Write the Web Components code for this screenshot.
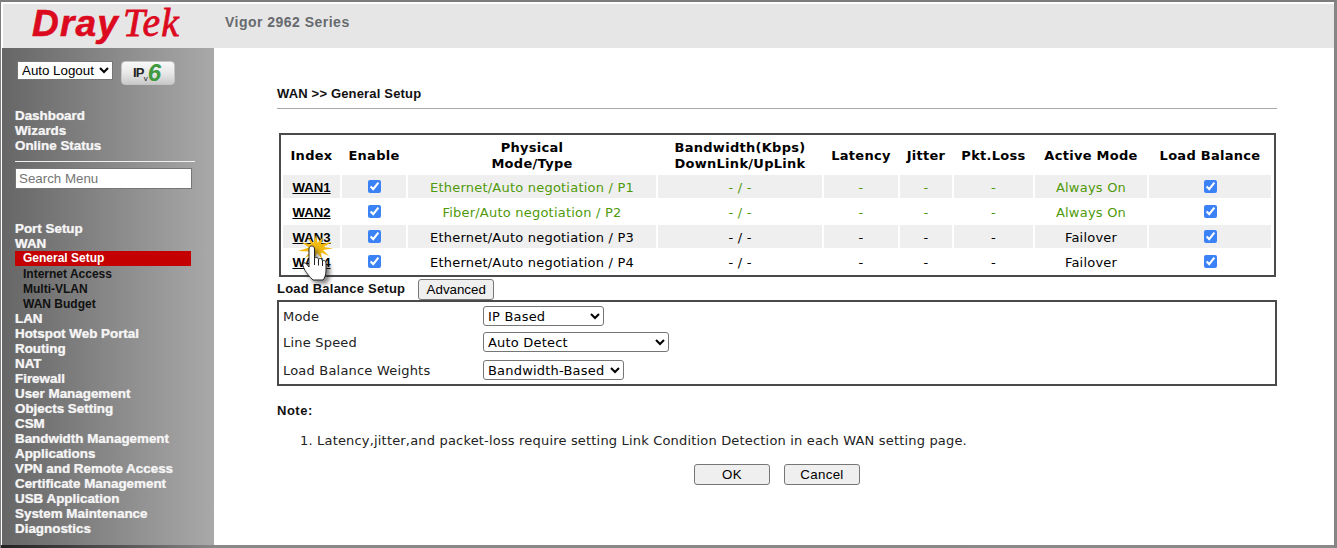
<!DOCTYPE html>
<html>
<head>
<meta charset="utf-8">
<title>Vigor 2962 Series</title>
<style>
    html, body { margin: 0; padding: 0; background: #fff; }
</style>
</head>
<body>
<router-frame>
    <dray-header slot="top"></dray-header>
    <side-menu slot="side"></side-menu>
    <wan-page slot="main"></wan-page>
</router-frame>

<script>
const frameTpl = document.createElement('template')
frameTpl.innerHTML = `
<style>
    :host {
        display: flex;
        flex-direction: column;
        box-sizing: border-box;
        width: 1337px;
        height: 548px;
        overflow: hidden;
        position: relative;
        background: #fff;
        border-top: 2px solid #7d7d7d;
        border-left: 1px solid #7d7d7d;
        border-right: 3px solid #868686;
        padding-top: 2px;
    }
    .row { display: flex; flex: 1; min-height: 0; padding-left: 1px; }
    .edge {
        height: 3px;
        flex: none;
        background: linear-gradient(90deg, #222 0, #555 120px, #888 214px, #8a8a8a 100%);
    }
</style>
<slot name="top"></slot>
<div class="row">
    <slot name="side"></slot>
    <slot name="main"></slot>
</div>
<div class="edge"></div>
`
class RouterFrame extends HTMLElement {
    constructor() {
        super()
        this.attachShadow({ mode: 'open' })
        this.shadowRoot.appendChild(frameTpl.content.cloneNode(true))
    }
}
customElements.define('router-frame', RouterFrame)

const headerTpl = document.createElement('template')
headerTpl.innerHTML = `
<style>
    :host {
        display: flex;
        align-items: center;
        height: 44px;
        flex: none;
        margin-left: 2px;
        background: #e6e6e6;
    }
    .logo {
        width: 196px;
        height: 48px;
        margin-top: -4px;
        align-self: flex-start;
        padding-left: 29px;
        box-sizing: border-box;
        display: flex;
        align-items: baseline;
        color: #dc0a1e;
        white-space: nowrap;
    }
    .dray {
        font: italic bold 37px "Liberation Sans", sans-serif;
        letter-spacing: 1.2px;
        -webkit-text-stroke: .6px #dc0a1e;
    }
    .tek {
        font: italic 39.500px "Liberation Serif", serif;
        margin-left: 4px;
        letter-spacing: 1.200px;
        -webkit-text-stroke: .8px #dc0a1e;
    }
    .title {
        margin: 0 0 8px 26px;
        font: bold 14px "Liberation Sans", sans-serif;
        letter-spacing: .48px;
        color: #666a6e;
    }
</style>
<div class="logo"><span class="dray">Dray</span><span class="tek">Tek</span></div>
<div class="title">Vigor 2962 Series</div>
`
class DrayHeader extends HTMLElement {
    constructor() {
        super()
        this.attachShadow({ mode: 'open' })
        this.shadowRoot.appendChild(headerTpl.content.cloneNode(true))
    }
}
customElements.define('dray-header', DrayHeader)

const menuTpl = document.createElement('template')
menuTpl.innerHTML = `
<style>
    :host {
        display: block;
        flex: none;
        width: 212px;
        box-sizing: border-box;
        padding: 13px 22px 0 13px;
        background: linear-gradient(90deg, #666 0, #a9a9a9 100%);
        font: bold 13.4px/15px "Liberation Sans", sans-serif;
        color: #f5f5f5;
    }
    .tools { display: flex; align-items: flex-start; padding-left: 2px; gap: 8px; height: 47px; }
    .tools select {
        width: 96px;
        height: 19px;
        margin: 0;
        padding: 0;
        font: 13.33px "Liberation Sans", sans-serif;
        color: #000;
        background: #fff;
        border: 1px solid #767676;
        border-radius: 0;
    }
    .ipv6 {
        width: 54px;
        height: 24px;
        box-sizing: border-box;
        padding-left: 11px;
        border: 1px solid #c4c4c4;
        border-radius: 4px;
        background: linear-gradient(#f8f8f8, #e8e8e8 50%, #c9c9c9);
        display: flex;
        align-items: center;
        color: #222;
        font: bold 13px/22px "Liberation Sans", sans-serif;
        letter-spacing: -.8px;
    }
    .ipv6 small { font-size: 8px; align-self: flex-end; line-height: 11px; font-weight: normal; letter-spacing: 0; }
    .ipv6 b { font: italic bold 24px/22px "Liberation Sans", sans-serif; color: #3f9a3f; letter-spacing: 0; }
    .item { display: block; height: 15px; white-space: nowrap; -webkit-text-stroke: .2px #f5f5f5; text-shadow: 0 0 1px rgba(255,255,255,.4); }
    .rule { height: 1px; background: #f0f0f0; margin: 8px 0 6px; width: 180px; }
    .search {
        display: block;
        box-sizing: border-box;
        width: 177px;
        height: 21px;
        margin: 0 0 32px;
        padding: 1px 3px;
        font: 13.33px "Liberation Sans", sans-serif;
        background: #fff;
        border: 1px solid #767676;
    }
    .search::placeholder { color: #757575; }
    .sub { display: block; height: 15px; font-size: 12px; line-height: 16px; padding-left: 8px; color: #111; white-space: nowrap; }
    .sub.on { background: #c40000; color: #fff; width: 168px; line-height: 15px; }
</style>
<div class="tools">
    <select><option>Auto Logout</option></select>
    <div class="ipv6">IP<small>v</small><b>6</b></div>
</div>
<span class="item">Dashboard</span>
<span class="item">Wizards</span>
<span class="item">Online Status</span>
<div class="rule"></div>
<input class="search" placeholder="Search Menu">
<span class="item">Port Setup</span>
<span class="item">WAN</span>
<span class="sub on">General Setup</span>
<span class="sub">Internet Access</span>
<span class="sub">Multi-VLAN</span>
<span class="sub">WAN Budget</span>
<span class="item">LAN</span>
<span class="item">Hotspot Web Portal</span>
<span class="item">Routing</span>
<span class="item">NAT</span>
<span class="item">Firewall</span>
<span class="item">User Management</span>
<span class="item">Objects Setting</span>
<span class="item">CSM</span>
<span class="item">Bandwidth Management</span>
<span class="item">Applications</span>
<span class="item">VPN and Remote Access</span>
<span class="item">Certificate Management</span>
<span class="item">USB Application</span>
<span class="item">System Maintenance</span>
<span class="item">Diagnostics</span>
`
class SideMenu extends HTMLElement {
    constructor() {
        super()
        this.attachShadow({ mode: 'open' })
        this.shadowRoot.appendChild(menuTpl.content.cloneNode(true))
    }
}
customElements.define('side-menu', SideMenu)

const COLS = '57px 64px 248px 164px 74px 52px 79px 112px 122px'

const rowTpl = document.createElement('template')
rowTpl.innerHTML = `
<style>
    :host {
        display: grid;
        grid-template-columns: ${COLS};
        grid-template-rows: 23px;
        column-gap: 2px;
        height: 23px;
        margin-bottom: 2px;
        font: 13px/25px "DejaVu Sans", sans-serif;
        letter-spacing: .22px;
        color: var(--row-color, #000);
        text-align: center;
    }
    div { background: var(--row-bg, transparent); white-space: nowrap; height: 23px; }
    .idx { font: bold 13.2px/25px "Liberation Sans", sans-serif; letter-spacing: 0; color: #000; text-decoration: underline; }
    input { width: 13px; height: 13px; margin: 5px 0 0; accent-color: #3b82f6; display: inline-block; vertical-align: top; }
</style>
<div class="idx"><span id="name"></span></div>
<div><input type="checkbox" checked></div>
<div id="mode"></div>
<div>- / -</div>
<div>-</div>
<div>-</div>
<div>-</div>
<div id="active"></div>
<div><input type="checkbox" checked></div>
`
class WanRow extends HTMLElement {
    constructor() {
        super()
        this.attachShadow({ mode: 'open' })
        this.shadowRoot.appendChild(rowTpl.content.cloneNode(true))
    }
    connectedCallback() {
        this.shadowRoot.getElementById('name').textContent = this.getAttribute('name')
        this.shadowRoot.getElementById('mode').textContent = this.getAttribute('mode')
        this.shadowRoot.getElementById('active').textContent = this.getAttribute('active')
    }
}
customElements.define('wan-row', WanRow)

const tableTpl = document.createElement('template')
tableTpl.innerHTML = `
<style>
    :host {
        display: block;
        box-sizing: border-box;
        width: 997px;
        height: 144px;
        margin-left: 2px;
        border: 2px solid #4a4a4a;
        padding: 0 0 0 2px;
        position: relative;
    }
    .head {
        display: grid;
        grid-template-columns: ${COLS};
        column-gap: 2px;
        height: 40px;
        box-sizing: border-box;
        padding-top: 2px;
        align-items: center;
        text-align: center;
        font: bold 13px/16px "DejaVu Sans", sans-serif;
        letter-spacing: .28px;
        color: #000;
    }
    .head div { white-space: nowrap; }
    .g { --row-color: #4f9a0a; }
    .s { --row-bg: #efefef; }
</style>
<div class="head">
    <div>Index</div>
    <div>Enable</div>
    <div>Physical<br>Mode/Type</div>
    <div>Bandwidth(Kbps)<br>DownLink/UpLink</div>
    <div>Latency</div>
    <div>Jitter</div>
    <div>Pkt.Loss</div>
    <div>Active Mode</div>
    <div>Load Balance</div>
</div>
<wan-row class="g s" name="WAN1" mode="Ethernet/Auto negotiation / P1" active="Always On"></wan-row>
<wan-row class="g" name="WAN2" mode="Fiber/Auto negotiation / P2" active="Always On"></wan-row>
<wan-row class="s" name="WAN3" mode="Ethernet/Auto negotiation / P3" active="Failover"></wan-row>
<wan-row name="WAN4" mode="Ethernet/Auto negotiation / P4" active="Failover"></wan-row>
`
class WanTable extends HTMLElement {
    constructor() {
        super()
        this.attachShadow({ mode: 'open' })
        this.shadowRoot.appendChild(tableTpl.content.cloneNode(true))
    }
}
customElements.define('wan-table', WanTable)

const lbTpl = document.createElement('template')
lbTpl.innerHTML = `
<style>
    :host { display: block; font: 13px "DejaVu Sans", sans-serif; letter-spacing: .2px; color: #222; }
    .title { display: flex; align-items: center; height: 23px; gap: 13px; letter-spacing: 0; }
    .title b { font: bold 13px "Liberation Sans", sans-serif; letter-spacing: .22px; color: #111; }
    button {
        width: 76px;
        height: 21px;
        margin-top: 2px;
        padding: 0;
        font: 13.33px "Liberation Sans", sans-serif;
        background: #efefef;
        color: #000;
        border: 1px solid #767676;
        border-radius: 3px;
    }
    .box {
        box-sizing: border-box;
        height: 86px;
        border: 2px solid #4a4a4a;
        display: grid;
        grid-template-columns: 200px auto;
        justify-content: start;
        align-content: start;
        padding: 4px 0 0 4px;
    }
    .lab { display: flex; align-items: center; height: 20px; white-space: nowrap; }
    select {
        display: block;
        height: 20px;
        margin: 0 0 6px;
        padding: 0;
        font: 13px "DejaVu Sans", sans-serif;
        letter-spacing: .2px;
        color: #000;
        background: #fff;
        border: 1px solid #767676;
        border-radius: 3px;
        box-sizing: border-box;
    }
    .w { margin-top: 2px; }
</style>
<div class="title"><b>Load Balance Setup</b><button>Advanced</button></div>
<div class="box">
    <div class="lab">Mode</div><select style="width:121px"><option>IP Based</option></select>
    <div class="lab">Line Speed</div><select style="width:186px"><option>Auto Detect</option></select>
    <div class="lab w">Load Balance Weights</div><select class="w" style="width:141px"><option>Bandwidth-Based</option></select>
</div>
`
class LbSetup extends HTMLElement {
    constructor() {
        super()
        this.attachShadow({ mode: 'open' })
        this.shadowRoot.appendChild(lbTpl.content.cloneNode(true))
    }
}
customElements.define('lb-setup', LbSetup)

const noteTpl = document.createElement('template')
noteTpl.innerHTML = `
<style>
    :host { display: block; margin-top: 17px; font: 13px/16px "DejaVu Sans", sans-serif; color: #222; }
    b { display: block; font: bold 13px/16px "Liberation Sans", sans-serif; letter-spacing: .5px; color: #111; }
    ol { margin: 14px 0 0; padding: 0 0 0 23px; list-style: none; white-space: nowrap; letter-spacing: .18px; }
    .acts { display: flex; justify-content: center; gap: 14px; margin-top: 15px; width: 1000px; box-sizing: border-box; }
    button {
        width: 76px;
        height: 21px;
        padding: 0;
        font: 13.33px "Liberation Sans", sans-serif;
        letter-spacing: .3px;
        background: #efefef;
        color: #000;
        border: 1px solid #767676;
        border-radius: 3px;
    }
</style>
<b>Note:</b>
<ol><li>1. Latency,jitter,and packet-loss require setting Link Condition Detection in each WAN setting page.</li></ol>
<div class="acts"><button>OK</button><button>Cancel</button></div>
`
class PageNote extends HTMLElement {
    constructor() {
        super()
        this.attachShadow({ mode: 'open' })
        this.shadowRoot.appendChild(noteTpl.content.cloneNode(true))
    }
}
customElements.define('page-note', PageNote)

const cursorTpl = document.createElement('template')
cursorTpl.innerHTML = `
<style>
    :host { display: block; position: absolute; left: 82px; top: 184px; width: 40px; height: 52px; pointer-events: none; }
    svg { display: block; overflow: visible; }
</style>
<svg width="40" height="52" viewBox="0 0 40 52">
    <defs>
        <filter id="sh" x="-40%" y="-40%" width="180%" height="180%"><feGaussianBlur stdDeviation="2"/></filter>
    </defs>
    <polygon fill="#f2b90f" points="20,3 21.500,11 27,5 25,12 36,10 27.500,15 37,16.500 27,18 33,24 25,20.500 26,27 21,21 18,27 17.500,21 9,26 14,19.500 2,19 13,15.500 5,10 15,12.500 12,5 17.500,11"/>
    <path d="M17 48 C13 44 9 39 8 34 C7.500 31 10 30.500 12 33 L14 36 L14 17 C14 13 20 13 20 17 L20 27 C21 25 24 25 24.500 28 C25.500 26.500 28 26.500 28.500 29.500 C29.500 28.500 32 29 32 32 L32 40 C32 44 30 47 28 49 Z" fill="#222" opacity=".55" filter="url(#sh)" transform="translate(2 3)"/>
    <path d="M16 47 C12 43 8 38 7 33.500 C6.500 30.500 9 30 11 32.500 L13 35 L13 17 C13 13 18.500 13 18.500 17 L18.500 26.500 C19.500 25 22 25 22.500 27.500 C23.500 26 26 26 26.500 29 C27.500 28 30 28.500 30 31 L30 39 C30 43 28.500 46 27 48 L17 48 Z" fill="#fff" stroke="#222" stroke-width="1"/>
    <path d="M18.500 26.500V33M22.500 27.500V33.500M26.500 29V34" stroke="#222" stroke-width="1" fill="none"/>
</svg>
`
class HandCursor extends HTMLElement {
    constructor() {
        super()
        this.attachShadow({ mode: 'open' })
        this.shadowRoot.appendChild(cursorTpl.content.cloneNode(true))
    }
}
customElements.define('hand-cursor', HandCursor)

const pageTpl = document.createElement('template')
pageTpl.innerHTML = `
<style>
    :host { display: block; flex: 1; position: relative; padding: 37px 0 0 63px; box-sizing: border-box; min-width: 0; }
    .crumb {
        width: 1000px;
        height: 24px;
        box-sizing: border-box;
        border-bottom: 1px solid #a8a8a8;
        font: bold 13px/18px "Liberation Sans", sans-serif;
        letter-spacing: .17px;
        color: #111;
        margin-bottom: 24px;
    }
    section { width: 1000px; }
</style>
<div class="crumb">WAN &gt;&gt; General Setup</div>
<section>
    <wan-table></wan-table>
    <lb-setup></lb-setup>
    <page-note></page-note>
</section>
<hand-cursor></hand-cursor>
`
class WanPage extends HTMLElement {
    constructor() {
        super()
        this.attachShadow({ mode: 'open' })
        this.shadowRoot.appendChild(pageTpl.content.cloneNode(true))
    }
}
customElements.define('wan-page', WanPage)
</script>
</body>
</html>
